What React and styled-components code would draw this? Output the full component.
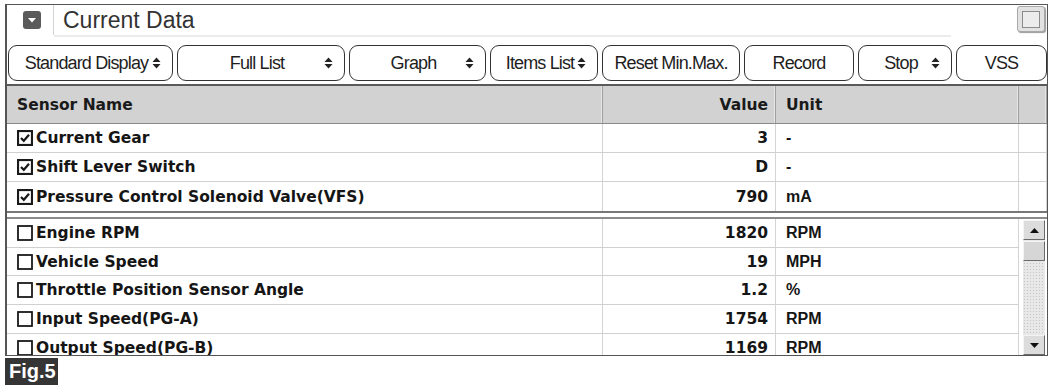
import React from 'react';
import styled, {createGlobalStyle} from 'styled-components';

const GlobalStyle = createGlobalStyle`
   html, body {
      margin: 0;
      padding: 0;
      background: white;
   }
   body {
      font-family: "Liberation Sans", Arial, sans-serif;
   }
`;

const NAME_W = 596;
const VALUE_W = 173;
const UNIT_W = 243;
const ROW_H = 29;

const Page = styled.div`
   padding: 4px 4px 0 5px;
   width: 1042px;
`;

const Frame = styled.div`
   border: 1px solid #555555;
   border-left-width: 2px;
   width: 1040px;
   box-sizing: content-box;
`;

const TitleBar = styled.div`
   display: flex;
   align-items: stretch;
   height: 32px;
`;

const IconCell = styled.div`
   display: flex;
   align-items: center;
   padding: 0 12px 0 16px;
   border-right: 1px solid #d4d4d4;
   margin-bottom: 2px;
`;

const TitleText = styled.div`
   flex: 1;
   display: flex;
   align-items: center;
   padding-left: 9px;
   margin-right: 66px;
   font-size: 23px;
   color: #333333;
   border-bottom: 2px solid #ececec;
`;

const CornerBox = styled.div`
   width: 26px;
   height: 24px;
   margin: 1px 2px 0 0;
   border: 1px solid #a8a8a8;
   border-radius: 3px;
   background: #e2e2e2;
   box-shadow: 1px 1px 1px #9a9a9a;
   display: flex;
   align-items: center;
   justify-content: center;
`;

const CornerInner = styled.div`
   width: 16px;
   height: 15px;
   border: 1px solid #8c8c8c;
   background: #ececec;
`;

const Toolbar = styled.div`
   display: flex;
   gap: 4px;
   padding: 8px 0 3px 1px;
`;

const ToolButton = styled.div`
   width: ${p => p.$w}px;
   height: 36px;
   box-sizing: border-box;
   border: 1.5px solid #333333;
   border-radius: 9px;
   display: grid;
   grid-template-columns: ${p => p.$arrow ? '12px 1fr 20px' : '1fr'};
   align-items: center;
   font-size: 18px;
   letter-spacing: -0.85px;
   color: #1e1e1e;
`;

const ButtonLabel = styled.span`
   text-align: center;
   white-space: nowrap;
`;

const Table = styled.div`
   border-top: 2px solid #5a5a5a;
`;

const HeaderRow = styled.div`
   display: grid;
   grid-template-columns: ${NAME_W}px ${VALUE_W}px ${UNIT_W}px 1fr;
   height: 37px;
   background: #d2d2d2;
   border-bottom: 1px solid #8a8a8a;
   font-family: "DejaVu Sans", Verdana, sans-serif;
   font-weight: bold;
   font-size: 15.5px;
   color: #1a1a1a;
`;

const HeaderCell = styled.div`
   display: flex;
   align-items: center;
   justify-content: ${p => p.$right ? 'flex-end' : 'flex-start'};
   padding: ${p => p.$right ? '0 7px 0 0' : '0 0 0 10px'};
   border-right: 1px solid #a0a0a0;
   box-shadow: inset -1px 0 0 #e6e6e6;
`;

const UpperSection = styled.div`
   border-bottom: 2px solid #777777;
   margin-bottom: 4px;
`;

const LowerSection = styled.div`
   display: flex;
   height: 136px;
   overflow: hidden;
   border-top: 2px solid #8a8a8a;
`;

const LowerRows = styled.div`
   width: ${NAME_W + VALUE_W + UNIT_W}px;
`;

const Row = styled.div`
   display: grid;
   grid-template-columns: ${NAME_W}px ${VALUE_W}px ${UNIT_W}px ${p => p.$tail ? '1fr' : ''};
   height: ${p => p.$h}px;
   box-sizing: border-box;
   border-bottom: 1px solid #d0d0d0;
   font-family: "DejaVu Sans", Verdana, sans-serif;
   font-weight: bold;
   font-size: 15.5px;
   color: #151515;
   &:last-child {
      border-bottom: ${p => p.$tail ? 'none' : '1px solid #d0d0d0'};
   }
`;

const Cell = styled.div`
   display: flex;
   align-items: center;
   justify-content: ${p => p.$right ? 'flex-end' : 'flex-start'};
   padding: ${p => p.$pad || '0'};
   border-right: 1px solid #d4d4d4;
   white-space: nowrap;
   gap: 2px;
`;

const UnitText = styled.span`
   font-family: "Liberation Sans", Arial, sans-serif;
   font-weight: bold;
   font-size: 16px;
`;

const ScrollArea = styled.div`
   flex: 1;
   display: flex;
   justify-content: center;
   padding: 1px 0 0 2px;
`;

const ScrollBar = styled.div`
   width: 22px;
   display: flex;
   flex-direction: column;
   background-color: #e8e8e8;
   background-image: radial-gradient(#c4c4c4 0.6px, transparent 0.8px);
   background-size: 3px 3px;
`;

const ScrollButton = styled.div`
   height: 20px;
   box-sizing: border-box;
   background: #dcdcdc;
   border: 1px solid #f4f4f4;
   border-right-color: #6a6a6a;
   border-bottom-color: #6a6a6a;
   display: flex;
   align-items: center;
   justify-content: center;
   margin-top: ${p => p.$bottom ? 'auto' : '0'};
`;

const ScrollThumb = styled(ScrollButton)`
   height: 20px;
   margin-top: 1px;
   background: #d6d6d6;
`;

const FigLabel = styled.div`
   margin-top: 2px;
   width: 53px;
   height: 27px;
   background: #353535;
   color: white;
   font-weight: bold;
   font-size: 20px;
   display: flex;
   align-items: center;
   padding-left: 4px;
   box-sizing: border-box;
`;

function SortArrows() {
   return (
      <svg width="9" height="14" viewBox="0 0 9 14">
         <polygon points="0.5,6 4.5,1.5 8.5,6" fill="#222"/>
         <polygon points="0.5,8 4.5,12.5 8.5,8" fill="#222"/>
      </svg>
   );
}

function TitleIcon() {
   return (
      <svg width="18" height="18" viewBox="0 0 18 18">
         <rect x="0" y="0" width="18" height="18" rx="3" fill="#5b5b5b"/>
         <polygon points="5,7 13,7 9,11.5" fill="white"/>
      </svg>
   );
}

function CheckBox({checked}) {
   return (
      <svg width="16" height="16" viewBox="0 0 16 16" style={{flex: 'none', marginRight: 1}}>
         <rect x="1" y="1" width="14" height="14" fill="white" stroke="#1a1a1a" strokeWidth={checked ? 2.2 : 1.8}/>
         {checked && <path d="M4 8 L6.8 10.8 L12 4.8" fill="none" stroke="#1a1a1a" strokeWidth="2.2"/>}
      </svg>
   );
}

function ScrollArrow({down}) {
   return (
      <svg width="9" height="5" viewBox="0 0 9 5">
         <polygon points={down ? '0,0 9,0 4.5,5' : '0,5 9,5 4.5,0'} fill="#111"/>
      </svg>
   );
}

const BUTTONS = [
   {label: 'Standard Display', w: 165, arrow: true},
   {label: 'Full List', w: 168, arrow: true},
   {label: 'Graph', w: 137, arrow: true},
   {label: 'Items List', w: 108, arrow: true},
   {label: 'Reset Min.Max.', w: 138},
   {label: 'Record', w: 110},
   {label: 'Stop', w: 94, arrow: true},
   {label: 'VSS', w: 91},
];

const FIXED_ROWS = [
   {name: 'Current Gear', value: '3', unit: '-'},
   {name: 'Shift Lever Switch', value: 'D', unit: '-'},
   {name: 'Pressure Control Solenoid Valve(VFS)', value: '790', unit: 'mA'},
];

const LIST_ROWS = [
   {name: 'Engine RPM', value: '1820', unit: 'RPM'},
   {name: 'Vehicle Speed', value: '19', unit: 'MPH'},
   {name: 'Throttle Position Sensor Angle', value: '1.2', unit: '%'},
   {name: 'Input Speed(PG-A)', value: '1754', unit: 'RPM'},
   {name: 'Output Speed(PG-B)', value: '1169', unit: 'RPM'},
];

function SensorRow({row, checked, tail}) {
   return (
      <Row $tail={tail} $h={tail ? ROW_H : 28.7}>
         <Cell $pad="0 0 0 10px"><CheckBox checked={checked}/>{row.name}</Cell>
         <Cell $right $pad="0 7px 0 0">{row.value}</Cell>
         <Cell $pad="0 0 0 10px"><UnitText>{row.unit}</UnitText></Cell>
         {tail && <Cell/>}
      </Row>
   );
}

export default function App() {
   return (
      <Page>
         <GlobalStyle/>
         <Frame>
            <TitleBar>
               <IconCell><TitleIcon/></IconCell>
               <TitleText>Current Data</TitleText>
               <CornerBox><CornerInner/></CornerBox>
            </TitleBar>
            <Toolbar>
               {BUTTONS.map(b => (
                  <ToolButton key={b.label} $w={b.w} $arrow={b.arrow}>
                     {b.arrow && <span/>}
                     <ButtonLabel>{b.label}</ButtonLabel>
                     {b.arrow && <SortArrows/>}
                  </ToolButton>
               ))}
            </Toolbar>
            <Table>
               <HeaderRow>
                  <HeaderCell>Sensor Name</HeaderCell>
                  <HeaderCell $right>Value</HeaderCell>
                  <HeaderCell>Unit</HeaderCell>
                  <HeaderCell/>
               </HeaderRow>
               <UpperSection>
                  {FIXED_ROWS.map(r => <SensorRow key={r.name} row={r} checked tail/>)}
               </UpperSection>
               <LowerSection>
                  <LowerRows>
                     {LIST_ROWS.map(r => <SensorRow key={r.name} row={r}/>)}
                  </LowerRows>
                  <ScrollArea>
                     <ScrollBar>
                        <ScrollButton><ScrollArrow/></ScrollButton>
                        <ScrollThumb/>
                        <ScrollButton $bottom><ScrollArrow down/></ScrollButton>
                     </ScrollBar>
                  </ScrollArea>
               </LowerSection>
            </Table>
         </Frame>
         <FigLabel>Fig.5</FigLabel>
      </Page>
   );
}
